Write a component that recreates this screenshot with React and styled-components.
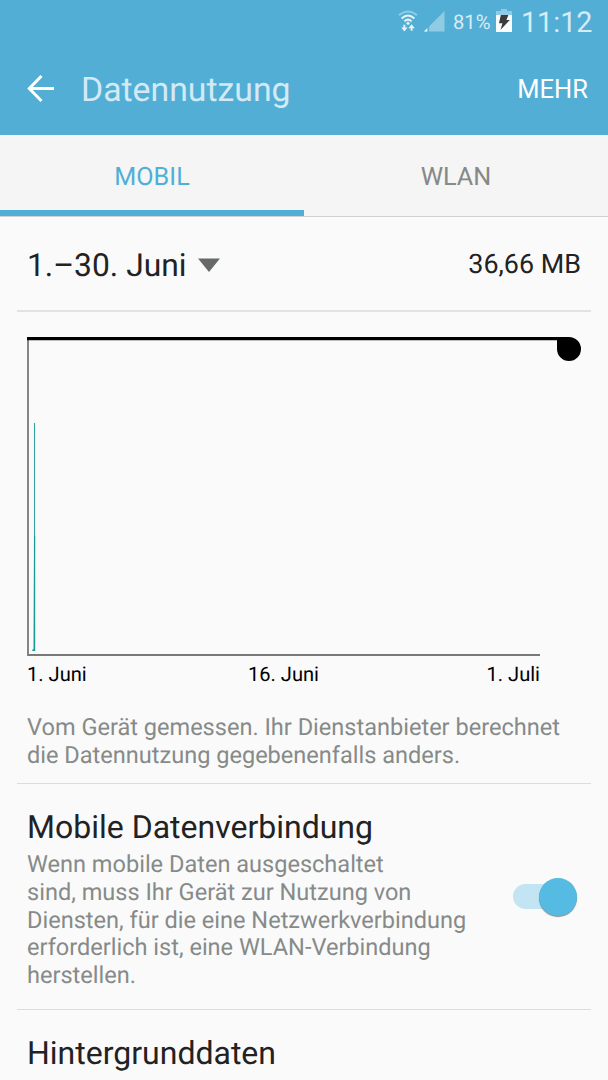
import React from 'react';
import styled, { createGlobalStyle } from 'styled-components';

const GlobalStyle = createGlobalStyle`
  * {
    box-sizing: border-box;
  }

  body {
    margin: 0;
    background: #fafafa;
    font-family: Roboto, 'Liberation Sans', sans-serif;
    text-rendering: geometricPrecision;
  }
`;

const Screen = styled.div`
  width: 608px;
  height: 1080px;
  overflow: hidden;
  background: #fafafa;
  color: #222;
`;

const Header = styled.header`
  height: 135px;
  background: #52aed4;
`;

const StatusBar = styled.div`
  display: flex;
  justify-content: flex-end;
  align-items: center;
  height: 43px;
  padding-right: 15px;
  color: #d6ecf5;
`;

const BatteryLevel = styled.span`
  width: 37px;
  margin: 1px 6px 0 8px;
  font-size: 20.2px;
  line-height: 24px;
  white-space: nowrap;
`;

const Clock = styled.span`
  width: 72px;
  margin: 3px 0 0 9px;
  font-size: 28.7px;
  line-height: 34px;
  white-space: nowrap;
`;

const ActionBar = styled.div`
  display: flex;
  align-items: center;
  height: 92px;
  padding: 0 20px 0 26px;
`;

const PageTitle = styled.h1`
  flex: 1;
  margin: 3px 0 0 26px;
  color: #d2eaf4;
  font-size: 33.8px;
  font-weight: 400;
  line-height: 40px;
`;

const MoreButton = styled.button`
  padding: 0;
  border: 0;
  background: none;
  color: #fff;
  font: inherit;
  font-size: 25.5px;
  line-height: 30px;
`;

const Tabs = styled.nav`
  display: grid;
  grid-template-columns: 1fr 1fr;
  height: 82px;
  background: #f5f5f5;
  border-bottom: 1px solid #d0d1d2;
`;

const Tab = styled.div`
  padding-top: 28px;
  border-bottom: 6px solid ${props => (props.$active ? '#52aed4' : 'transparent')};
  color: ${props => (props.$active ? '#4fafd5' : '#858988')};
  font-size: 25.2px;
  line-height: 30px;
  text-align: center;
`;

const Content = styled.main`
  padding: 0 17px;
`;

const CycleRow = styled.div`
  display: flex;
  align-items: center;
  height: 95px;
  padding: 2px 10px 0;
  border-bottom: 2px solid #e2e2e2;
`;

const Cycle = styled.span`
  margin-right: 11px;
  font-size: 31.8px;
  line-height: 38px;
`;

const Total = styled.span`
  margin: -2px 0 0 auto;
  font-size: 26.9px;
  line-height: 30px;
`;

const UsageSection = styled.section`
  height: 472px;
  padding: 24px 10px 0;
  border-bottom: 1px solid #dcdcdc;
`;

const Chart = styled.svg`
  display: block;
`;

const AxisLabels = styled.div`
  display: grid;
  grid-template-columns: repeat(3, 1fr);
  width: 513px;
  margin-top: 6px;
  color: #000;
  font-size: 20.1px;
  line-height: 24px;
`;

const AxisLabel = styled.span`
  text-align: ${props => props.$align};
`;

const Description = styled.p`
  margin: 0;
  color: #868a89;
  font-size: 23.55px;
  line-height: 27.6px;
  white-space: nowrap;
`;

const MeasuredNote = styled(Description)`
  margin-top: 28px;
`;

const Setting = styled.section`
  display: flex;
  align-items: center;
  justify-content: space-between;
  height: 226px;
  padding: 0 10px;
  border-bottom: 1px solid #dcdcdc;
`;

const SettingText = styled.div`
  padding-top: 4px;
`;

const SettingTitle = styled.h2`
  margin: 0 0 5.6px;
  font-size: 32px;
  font-weight: 400;
  line-height: 38px;
`;

const LastSetting = styled.section`
  padding: 24px 10px 0;
`;

const Switch = styled.div`
  display: flex;
  justify-content: flex-end;
  align-items: center;
  width: 64px;
  height: 25px;
  margin-right: 4px;
  border-radius: 13px;
  background: #c3e5f3;
`;

const Thumb = styled.span`
  width: 38px;
  height: 38px;
  border-radius: 50%;
  background: #55bbe2;
  box-shadow: 0 1px 1px rgba(0, 0, 0, 0.45);
`;

const SignalIndicators = styled.div`
  display: flex;
  align-items: center;
  gap: 6px;
`;

const WifiIcon = () => (
  <svg width="20" height="24" viewBox="0 0 20 24" fill="none">
    <path d="M1 5.200Q10-2.200 19 5.200" stroke="#90cbe3" strokeWidth="2" />
    <path d="M3.600 8.400Q10 2.600 16.400 8.400M6.400 11.400Q10 7.800 13.600 11.400" stroke="#e6f4fa" strokeWidth="2" />
    <circle cx="10" cy="13.300" r="1.500" fill="#e6f4fa" />
    <path d="M6.300 14.800v4M13.600 20.800v-4" stroke="#e6f4fa" strokeWidth="1.900" />
    <path d="M3.200 17.500h6.400l-3.200 4zM10.400 18.200h6.400l-3.200-4z" fill="#e6f4fa" />
  </svg>
);

const SignalIcon = () => (
  <svg width="21" height="21" viewBox="0 0 21 21">
    <path d="M0 20.500L20.500 0v20.500z" fill="#90cbe3" />
    <path d="M0 20.500L3.500 17v3.500z" fill="#f2fafd" />
    <path d="M4.300 15v6" stroke="#52aed4" strokeWidth="1.600" />
  </svg>
);

const BatteryIcon = () => (
  <svg width="16" height="25" viewBox="0 0 16 25">
    <path d="M5 0h6v2h5v5H0V2h5z" fill="#90cbe3" />
    <path d="M0 6h16v17H0z" fill="#fafdfe" />
    <path d="M4.800 6h7.600l-2 5h3.400L4.600 20.700l1.800-6.400H3z" fill="#3b3b3b" />
  </svg>
);

const BackIcon = () => (
  <svg width="29" height="28" viewBox="0 0 29 28" fill="none" stroke="#fff" strokeWidth="3">
    <path d="M28 13.500H4M15.500 1L3.300 13.500l12.200 12.500" />
  </svg>
);

const CaretIcon = () => (
  <svg width="22" height="14" viewBox="0 0 22 14">
    <path d="M0 .5h22L11 14z" fill="#666869" />
  </svg>
);

const UsageChart = () => (
  <Chart width="554" height="320" viewBox="0 0 554 320">
    <path d="M1 3v316h512" fill="none" stroke="#797979" strokeWidth="1.800" />
    <path d="M7.500 87v128" fill="none" stroke="#36a3a1" strokeWidth="1.100" />
    <path d="M7 200h1.200v115H5.300v-1.600h1.200z" fill="#179a91" />
    <path d="M0 1h542a12 12 0 1 1-12 12V4.300H0z" fill="#000" />
  </Chart>
);

const axisDates = [
  { date: '1. Juni', align: 'left' },
  { date: '16. Juni', align: 'center' },
  { date: '1. Juli', align: 'right' }
];

const App = () => (
  <>
    <GlobalStyle />
    <Screen>
      <Header>
        <StatusBar>
          <SignalIndicators>
            <WifiIcon />
            <SignalIcon />
          </SignalIndicators>
          <BatteryLevel>81%</BatteryLevel>
          <BatteryIcon />
          <Clock>11:12</Clock>
        </StatusBar>
        <ActionBar>
          <BackIcon />
          <PageTitle>Datennutzung</PageTitle>
          <MoreButton>MEHR</MoreButton>
        </ActionBar>
      </Header>
      <Tabs>
        <Tab $active>MOBIL</Tab>
        <Tab>WLAN</Tab>
      </Tabs>
      <Content>
        <CycleRow>
          <Cycle>1.–30. Juni</Cycle>
          <CaretIcon />
          <Total>36,66 MB</Total>
        </CycleRow>
        <UsageSection>
          <UsageChart />
          <AxisLabels>
            {axisDates.map(({ date, align }) => (
              <AxisLabel key={date} $align={align}>{date}</AxisLabel>
            ))}
          </AxisLabels>
          <MeasuredNote>
            Vom Gerät gemessen. Ihr Dienstanbieter berechnet
            <br />
            die Datennutzung gegebenenfalls anders.
          </MeasuredNote>
        </UsageSection>
        <Setting>
          <SettingText>
            <SettingTitle>Mobile Datenverbindung</SettingTitle>
            <Description>
              Wenn mobile Daten ausgeschaltet
              <br />
              sind, muss Ihr Gerät zur Nutzung von
              <br />
              Diensten, für die eine Netzwerkverbindung
              <br />
              erforderlich ist, eine WLAN-Verbindung
              <br />
              herstellen.
            </Description>
          </SettingText>
          <Switch>
            <Thumb />
          </Switch>
        </Setting>
        <LastSetting>
          <SettingTitle>Hintergrunddaten</SettingTitle>
        </LastSetting>
      </Content>
    </Screen>
  </>
);

export default App;
